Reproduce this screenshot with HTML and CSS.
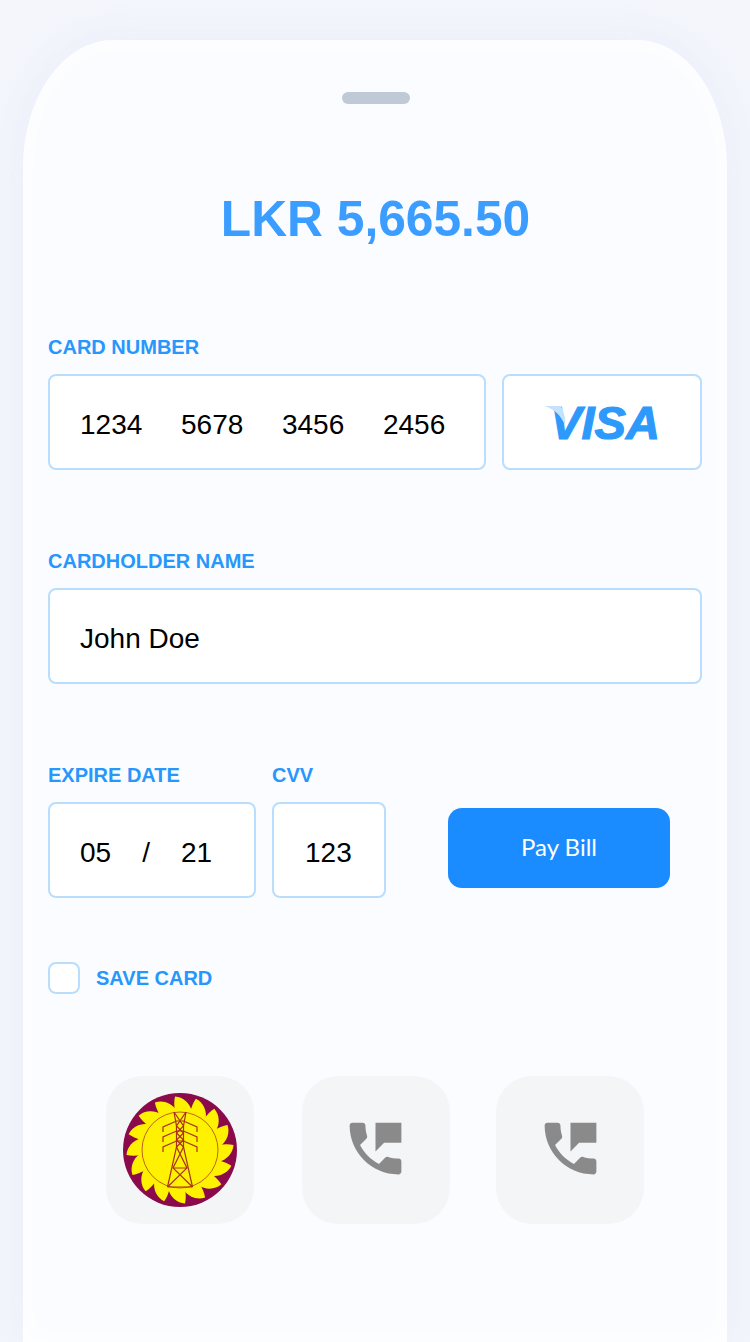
FILE: index.html
```html
<!DOCTYPE html>
<html lang="en">
<head>
  <meta charset="UTF-8" />
  <meta name="viewport" content="width=device-width, initial-scale=1.0"/>
  <title>Pay Bill</title>
  <link rel="stylesheet" href="styles.css">
</head>
<body>
  <div class="sheet">
    <div class="handle"></div>
    <h1 class="amount">LKR 5,665.50</h1>

    <div class="field-group">
      <div class="field-label">CARD NUMBER</div>
      <div class="row">
        <div class="field card-number">
          <span>1234</span><span>5678</span><span>3456</span><span>2456</span>
        </div>
        <div class="field card-brand">
          <svg class="visa-flick" viewBox="0 0 30 24" width="30" height="24">
            <path d="M0 1 H17 C20 8 22 13 21 20 C17 11 11 4 0 1 Z" fill="#c4e2fb"/>
          </svg>
          <span class="visa-text">VISA</span>
        </div>
      </div>
    </div>

    <div class="field-group">
      <div class="field-label">CARDHOLDER NAME</div>
      <div class="field">John Doe</div>
    </div>

    <div class="row expire-row">
      <div class="expire-col">
        <div class="field-label">EXPIRE DATE</div>
        <div class="field expire">
          <span>05</span><span>/</span><span>21</span>
        </div>
      </div>
      <div class="cvv-col">
        <div class="field-label">CVV</div>
        <div class="field cvv">123</div>
      </div>
      <button class="pay-btn" type="button">Pay Bill</button>
    </div>

    <label class="save-card">
      <span class="checkbox"></span>
      <span class="field-label">SAVE CARD</span>
    </label>

    <div class="tiles">
      <div class="tile">
        <svg class="logo" viewBox="-58 -58 116 116" width="116" height="116">
          <defs>
            <path id="blade" d="M-5 -39 C-6 -44 -6 -49 -5 -53.5 C3 -53 10 -47 12 -38 Z" fill="#fff200"/>
          </defs>
          <circle r="57" fill="#8a0a4b"/>
          <use href="#blade"/>
          <use href="#blade" transform="rotate(22.5)"/>
          <use href="#blade" transform="rotate(45)"/>
          <use href="#blade" transform="rotate(67.5)"/>
          <use href="#blade" transform="rotate(90)"/>
          <use href="#blade" transform="rotate(112.5)"/>
          <use href="#blade" transform="rotate(135)"/>
          <use href="#blade" transform="rotate(157.5)"/>
          <use href="#blade" transform="rotate(180)"/>
          <use href="#blade" transform="rotate(202.5)"/>
          <use href="#blade" transform="rotate(225)"/>
          <use href="#blade" transform="rotate(247.5)"/>
          <use href="#blade" transform="rotate(270)"/>
          <use href="#blade" transform="rotate(292.5)"/>
          <use href="#blade" transform="rotate(315)"/>
          <use href="#blade" transform="rotate(337.5)"/>
          <circle r="40" fill="#fff200"/>
          <circle r="38" fill="none" stroke="#c2601a" stroke-width="1"/>
          <g fill="none" stroke="#a8301e" stroke-width="1.2">
            <path d="M-6 -38 L-3.5 -24 V-3 L-12.5 37 M6 -38 L3.5 -24 V-3 L12.5 37"/>
            <path d="M-6 -38 L3.5 -24 L-3.5 -17 L3.5 -10 L-3.5 -3 M6 -38 L-3.5 -24 L3.5 -17 L-3.5 -10 L3.5 -3"/>
            <path d="M-17 -18 V-23 L-3.5 -29 H3.5 L17 -23 V-18"/>
            <path d="M-17 -8 V-13 L-3.5 -19 H3.5 L17 -13 V-8"/>
            <path d="M-17 2 V-3 L-3.5 -9 H3.5 L17 -3 V2"/>
            <path d="M-3.5 -3 L7 18 L-12.5 37 M3.5 -3 L-7 18 L12.5 37 M-7 18 H7 M-12.5 37 H12.5"/>
          </g>
        </svg>
      </div>
      <div class="tile">
        <svg class="phone" viewBox="0 0 24 24" width="69" height="69">
          <path d="M20 15.5c-1.25 0-2.45-.2-3.57-.57-.35-.11-.74-.03-1.02.24l-2.2 2.2c-2.83-1.44-5.15-3.75-6.59-6.58l2.2-2.21c.28-.27.36-.66.25-1.01C8.7 6.45 8.5 5.25 8.5 4c0-.55-.45-1-1-1H4c-.55 0-1 .45-1 1 0 9.39 7.61 17 17 17 .55 0 1-.45 1-1v-3.5c0-.55-.45-1-1-1zM12 3v10l3-3h6V3h-9z"/>
        </svg>
      </div>
      <div class="tile">
        <svg class="phone" viewBox="0 0 24 24" width="69" height="69">
          <path d="M20 15.5c-1.25 0-2.45-.2-3.57-.57-.35-.11-.74-.03-1.02.24l-2.2 2.2c-2.83-1.44-5.15-3.75-6.59-6.58l2.2-2.21c.28-.27.36-.66.25-1.01C8.7 6.45 8.5 5.25 8.5 4c0-.55-.45-1-1-1H4c-.55 0-1 .45-1 1 0 9.39 7.61 17 17 17 .55 0 1-.45 1-1v-3.5c0-.55-.45-1-1-1zM12 3v10l3-3h6V3h-9z"/>
        </svg>
      </div>
    </div>
  </div>
</body>
</html>
```

FILE: styles.css
```css
html, body {
  height: 100%;
}
body {
  margin: 0;
  height: 1342px;
  overflow: hidden;
  background-color: #f4f6fc;
  font-family: "Liberation Sans", Arial, sans-serif;
  color: #000;
}
.sheet {
  box-sizing: border-box;
  width: 704px;
  height: 1302px;
  margin: 40px 0 0 23px;
  padding: 52px 25px 0 25px;
  background-color: #fbfcff;
  border-radius: 90px 90px 0 0 / 127px 127px 0 0;
  box-shadow: inset 0 0 30px #fff, 0 0 40px rgba(225, 230, 248, 0.6);
}
.handle {
  width: 68px;
  height: 12px;
  margin-left: 294px;
  border-radius: 6px;
  background-color: #c0cad6;
}
.amount {
  margin: 86px 0 0 1px;
  height: 58px;
  line-height: 58px;
  text-align: center;
  font-size: 49.7px;
  font-weight: bold;
  color: #3a9dff;
}
.field-group {
  margin-bottom: 79px;
}
.amount + .field-group {
  margin-top: 87px;
}
.field-label {
  height: 24px;
  line-height: 24px;
  margin-bottom: 15px;
  font-size: 20px;
  font-weight: bold;
  color: #2797fb;
}
.row {
  display: flex;
  gap: 16px;
}
.field {
  box-sizing: border-box;
  display: flex;
  align-items: center;
  height: 96px;
  padding: 6px 30px 0 30px;
  background-color: #fff;
  border: 2px solid #b9defd;
  border-radius: 8px;
  font-size: 28px;
}
.card-number {
  width: 438px;
  gap: 38.7px;
}
.card-brand {
  position: relative;
  justify-content: center;
  width: 200px;
  padding: 0;
}
.visa-text {
  margin: 0 0 0 6px;
  font-size: 47px;
  font-weight: bold;
  font-style: italic;
  color: #2c99fb;
  -webkit-text-stroke: 1.2px #2c99fb;
}
.visa-flick {
  position: absolute;
  left: 40px;
  top: 29px;
}
.expire {
  width: 208px;
  gap: 31px;
}
.cvv {
  width: 114px;
  padding-left: 31px;
}
.pay-btn {
  width: 222px;
  height: 80px;
  margin: 45px 0 0 46px;
  padding-bottom: 4px;
  background-color: #1a8cff;
  color: #fff;
  border: none;
  border-radius: 14px;
  font-family: Lato, sans-serif;
  font-size: 24px;
  cursor: pointer;
}
.save-card {
  display: flex;
  align-items: center;
  gap: 16px;
  margin-top: 64px;
}
.save-card .field-label {
  margin-bottom: 0;
}
.checkbox {
  box-sizing: border-box;
  width: 32px;
  height: 32px;
  background-color: #fff;
  border: 2px solid #b9defd;
  border-radius: 8px;
}
.tiles {
  display: flex;
  gap: 48px;
  margin: 82px 0 0 58px;
}
.tile {
  display: flex;
  align-items: center;
  justify-content: center;
  width: 148px;
  height: 148px;
  border-radius: 36px;
  background-color: #f4f5f7;
}
.tile:last-child {
  margin-left: -2px;
}
.phone {
  margin: 0 2px 3px 0;
  fill: #8a8a8a;
}
.tile:last-child .phone {
  margin: 0 0 3px 1px;
}
```
